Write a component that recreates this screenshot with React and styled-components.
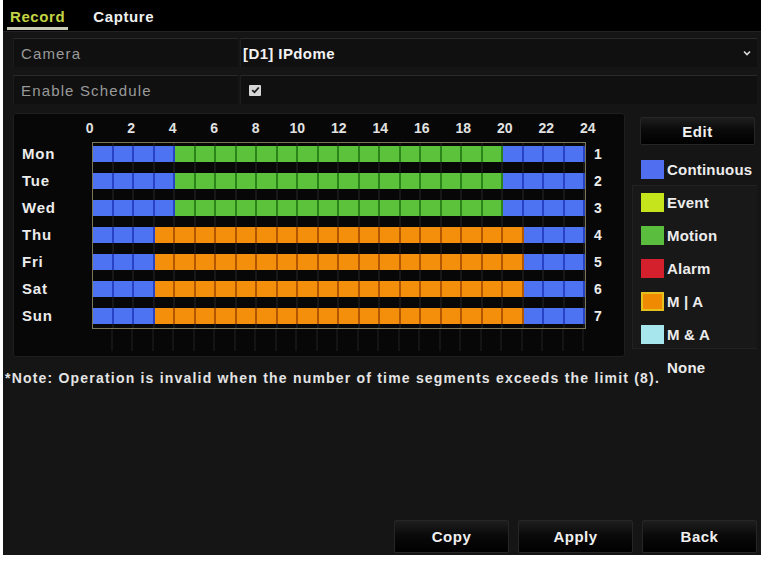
import React from 'react';
import styled, { createGlobalStyle } from 'styled-components';

const GlobalStyle = createGlobalStyle`
  html, body {
    margin: 0;
    padding: 0;
    background: #fff;
  }
  body {
    font-family: "Liberation Sans", Arial, sans-serif;
  }
`;

const COLORS = {
  continuous: { fill: '#4d72f2', line: '#2743c4' },
  motion: { fill: '#5cc23c', line: '#2a8418' },
  mix: { fill: '#f48f0c', line: '#b35600' },
};

const DAYS = [
  { name: 'Mon', segs: [[0, 4, 'continuous'], [4, 20, 'motion'], [20, 24, 'continuous']] },
  { name: 'Tue', segs: [[0, 4, 'continuous'], [4, 20, 'motion'], [20, 24, 'continuous']] },
  { name: 'Wed', segs: [[0, 4, 'continuous'], [4, 20, 'motion'], [20, 24, 'continuous']] },
  { name: 'Thu', segs: [[0, 3, 'continuous'], [3, 21, 'mix'], [21, 24, 'continuous']] },
  { name: 'Fri', segs: [[0, 3, 'continuous'], [3, 21, 'mix'], [21, 24, 'continuous']] },
  { name: 'Sat', segs: [[0, 3, 'continuous'], [3, 21, 'mix'], [21, 24, 'continuous']] },
  { name: 'Sun', segs: [[0, 3, 'continuous'], [3, 21, 'mix'], [21, 24, 'continuous']] },
];

const HOURS = [0, 2, 4, 6, 8, 10, 12, 14, 16, 18, 20, 22, 24];

const LEGEND = [
  { label: 'Continuous', fill: '#4f6ef0' },
  { label: 'Event', fill: '#c6e41c' },
  { label: 'Motion', fill: '#5bbd3e' },
  { label: 'Alarm', fill: '#d4202c' },
  { label: 'M | A', fill: '#f08a00', border: '#e6c11e' },
  { label: 'M & A', fill: '#a8e6ee' },
  { label: 'None', fill: 'transparent' },
];

const Screen = styled.div`
  width: 758px;
  height: 555px;
  margin-left: 3px;
  background: #151515;
  color: #e6e6e6;
  font-weight: bold;
  font-size: 15px;
  display: flex;
  flex-direction: column;
  overflow: hidden;
`;

const TabBar = styled.div`
  height: 32px;
  flex: none;
  background: #000;
  display: flex;
  gap: 22px;
  padding-left: 4px;
  box-sizing: border-box;
  border-bottom: 1px solid #232323;
`;

const Tab = styled.div`
  height: 30px;
  box-sizing: border-box;
  padding: 8px 3px 0;
  line-height: 17px;
  letter-spacing: 0.6px;
  color: ${p => (p.$active ? '#c3d444' : '#f0f0f0')};
  border-bottom: 3px solid ${p => (p.$active ? '#c9cab6' : 'transparent')};
`;

const Body = styled.div`
  flex: 1;
  display: flex;
  flex-direction: column;
  padding: 6px 4px 2px 10px;
  min-height: 0;
`;

const FieldRow = styled.div`
  display: flex;
  gap: 2px;
  height: 29px;
  margin-bottom: 8px;
`;

const Cell = styled.div`
  display: flex;
  align-items: center;
  background: #101010;
  border-top: 1px solid #2a2a2a;
  border-left: 1px solid #1d1d1d;
  box-sizing: border-box;
`;

const LabelCell = styled(Cell)`
  width: 225px;
  padding-left: 7px;
  color: #9a9a9a;
  font-weight: normal;
  letter-spacing: 1.15px;
`;

const ValueCell = styled(Cell)`
  flex: 1;
  padding: 0 6px 0 2px;
  color: #f2f2f2;
  letter-spacing: 0.4px;
  justify-content: space-between;
`;

const CheckBox = styled.span`
  width: 12px;
  height: 11px;
  margin-left: 6px;
  background: #d6d6d6;
  display: flex;
  align-items: center;
  justify-content: center;
  border-radius: 1px;
`;

const ScheduleArea = styled.div`
  display: flex;
  gap: 7px;
  margin-top: 1px;
`;

const LeftColumn = styled.div`
  width: 612px;
  display: flex;
  flex-direction: column;
`;

const GridPanel = styled.div`
  height: 244px;
  background: #070707;
  border: 1px solid #1e1e1e;
  border-radius: 3px;
  box-sizing: border-box;
  display: grid;
  grid-template-columns: 78px 494px 1fr;
  grid-template-rows: 28px 187px 1fr;
`;

const HourScale = styled.div`
  grid-column: 2;
  display: flex;
  align-items: center;
  margin-left: -23px;
  font-size: 14px;
  color: #e2e2e2;
`;

const HourLabel = styled.span`
  width: 41.5px;
  flex: none;
  text-align: center;
`;

const DayLabels = styled.div`
  grid-column: 1;
  display: flex;
  flex-direction: column;
  gap: 11px;
  padding: 4px 0 0 8px;
  letter-spacing: 0.8px;
  color: #ececec;
`;

const LineText = styled.span`
  height: 16px;
  line-height: 16px;
`;

const RowNumbers = styled(DayLabels)`
  grid-column: 3;
  padding-left: 8px;
  font-size: 14px;
`;

const Grid = styled.div`
  grid-column: 2;
  border: 1px solid #7a7759;
  box-sizing: border-box;
  padding: 3px 0 4px;
  display: flex;
  flex-direction: column;
  gap: 11px;
  background: repeating-linear-gradient(to right, transparent 0 18.5px, #171717 18.5px 20.5px);
`;

const Bar = styled.div`
  height: 16px;
  display: flex;
`;

const HourCell = styled.span`
  flex: 1;
  background: ${p => COLORS[p.$type].fill};
  border-right: 2px solid ${p => COLORS[p.$type].line};
`;

const Ruler = styled.div`
  grid-column: 2;
  margin-bottom: 5px;
  background: repeating-linear-gradient(to right, transparent 0 18.5px, #141414 18.5px 20.5px);
`;

const Note = styled.div`
  margin: 13px 0 0 -8px;
  font-size: 14px;
  letter-spacing: 1.2px;
  color: #e4e4e4;
  white-space: nowrap;
`;

const SidePanel = styled.div`
  flex: 1;
  display: flex;
  flex-direction: column;
  position: relative;
`;

const BackPanel = styled.div`
  position: absolute;
  left: 0;
  right: 0;
  top: 72px;
  height: 162px;
  background: #181818;
  border: 1px solid #222;
  border-right: none;
`;

const ActionButton = styled.button`
  width: ${p => p.$width || 115}px;
  height: ${p => p.$height || 33}px;
  padding: 0;
  border: 1px solid #262626;
  border-radius: 2px;
  background: linear-gradient(to bottom, #1e1e1e 0%, #0a0a0a 45%, #000 100%);
  color: #f0f0f0;
  font-family: inherit;
  font-weight: bold;
  font-size: 15px;
  letter-spacing: 0.5px;
`;

const EditButton = styled(ActionButton)`
  margin: 4px 0 0 8px;
  position: relative;
`;

const Legend = styled.div`
  display: flex;
  flex-direction: column;
  gap: 13px;
  margin: 14px 0 0 9px;
  position: relative;
`;

const LegendItem = styled.div`
  display: flex;
  align-items: center;
  gap: 3px;
  height: 20px;
  color: #ececec;
  letter-spacing: 0.2px;
`;

const Swatch = styled.span`
  width: 23px;
  height: 19px;
  box-sizing: border-box;
  background: ${p => p.$fill};
  border: ${p => (p.$border ? `2px solid ${p.$border}` : 'none')};
`;

const Spacer = styled.div`
  flex: 1;
`;

const ButtonBar = styled.div`
  display: flex;
  justify-content: flex-end;
  gap: 9px;
`;

function DayBar({ segs }) {
  const cells = [];
  segs.forEach(([from, to, type]) => {
    for (let h = from; h < to; h++) cells.push(<HourCell key={h} $type={type} />);
  });
  return <Bar>{cells}</Bar>;
}

export default function App() {
  return (
    <>
      <GlobalStyle />
      <Screen>
        <TabBar>
          <Tab $active>Record</Tab>
          <Tab>Capture</Tab>
        </TabBar>
        <Body>
          <FieldRow>
            <LabelCell>Camera</LabelCell>
            <ValueCell>
              <span>[D1] IPdome</span>
              <svg width="8" height="6" viewBox="0 0 8 6">
                <path d="M1 1.5 L4 4.5 L7 1.5" fill="none" stroke="#dcdcdc" strokeWidth="1.6" />
              </svg>
            </ValueCell>
          </FieldRow>
          <FieldRow>
            <LabelCell>Enable Schedule</LabelCell>
            <ValueCell>
              <CheckBox>
                <svg width="9" height="8" viewBox="0 0 9 8">
                  <path d="M1.2 4.2 L3.5 6.3 L7.8 1.5" fill="none" stroke="#1c1c1c" strokeWidth="1.8" />
                </svg>
              </CheckBox>
            </ValueCell>
          </FieldRow>
          <ScheduleArea>
            <LeftColumn>
              <GridPanel>
                <HourScale>
                  {HOURS.map(h => (
                    <HourLabel key={h}>{h}</HourLabel>
                  ))}
                </HourScale>
                <DayLabels>
                  {DAYS.map(d => (
                    <LineText key={d.name}>{d.name}</LineText>
                  ))}
                </DayLabels>
                <Grid>
                  {DAYS.map(d => (
                    <DayBar key={d.name} segs={d.segs} />
                  ))}
                </Grid>
                <RowNumbers>
                  {DAYS.map((d, i) => (
                    <LineText key={d.name}>{i + 1}</LineText>
                  ))}
                </RowNumbers>
                <Ruler />
              </GridPanel>
              <Note>*Note: Operation is invalid when the number of time segments exceeds the limit (8).</Note>
            </LeftColumn>
            <SidePanel>
              <BackPanel />
              <EditButton $height={28}>Edit</EditButton>
              <Legend>
                {LEGEND.map(item => (
                  <LegendItem key={item.label}>
                    <Swatch $fill={item.fill} $border={item.border} />
                    {item.label}
                  </LegendItem>
                ))}
              </Legend>
            </SidePanel>
          </ScheduleArea>
          <Spacer />
          <ButtonBar>
            <ActionButton>Copy</ActionButton>
            <ActionButton>Apply</ActionButton>
            <ActionButton>Back</ActionButton>
          </ButtonBar>
        </Body>
      </Screen>
    </>
  );
}
